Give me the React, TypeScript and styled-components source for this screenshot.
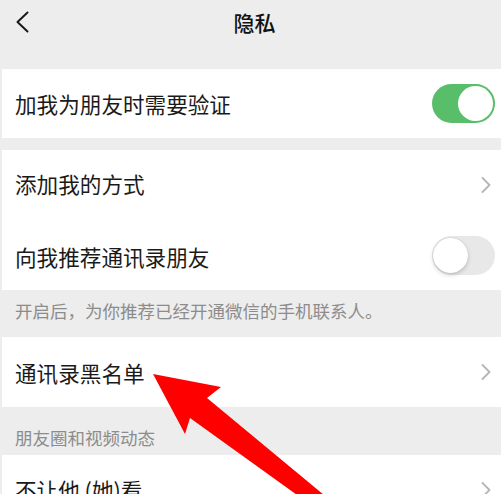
import { createGlobalStyle, styled } from "styled-components";

const GlobalStyle = createGlobalStyle`
  html, body {
    margin: 0;
    padding: 0;
    background: #ededed;
  }
  * {
    box-sizing: border-box;
  }
`;

const Page = styled.div`
  position: relative;
  width: 501px;
  height: 494px;
  overflow: hidden;
  background: #ededed;
  padding-left: 2px;
  font-family: "Noto Sans CJK SC", "Noto Sans", sans-serif;
  display: flex;
  flex-direction: column;
`;

const Header = styled.div`
  height: 69px;
  flex-shrink: 0;
`;

const NavBar = styled.div`
  position: relative;
  height: 44px;
  display: flex;
  align-items: center;
  justify-content: center;
  padding: 0 13px;
`;

const BackButton = styled.button`
  position: absolute;
  left: 13px;
  top: 11px;
  width: 14px;
  height: 22px;
  padding: 0;
  border: none;
  background: transparent;
  display: flex;
`;

const Title = styled.div`
  font-size: 21px;
  font-weight: 500;
  color: #111;
  line-height: 24px;
  margin-left: 6px;
`;

const Group = styled.div`
  background: #fff;
  flex-shrink: 0;
`;

const Row = styled.div`
  height: 70px;
  display: flex;
  align-items: center;
  justify-content: space-between;
  padding: 0 6px 0 13px;
`;

const Label = styled.div<{ $shift?: number }>`
  font-size: 21.6px;
  color: #1a1a1a;
  line-height: 26px;
  transform: translateY(${(p) => p.$shift ?? 0}px);
`;

const Gap = styled.div`
  height: 12px;
  flex-shrink: 0;
`;

const Note = styled.div<{ $height: number; $top: number }>`
  height: ${(p) => p.$height}px;
  padding: ${(p) => p.$top}px 13px 0;
  font-size: 17.5px;
  line-height: 22px;
  color: #8c8c8c;
  flex-shrink: 0;
`;

const Track = styled.div<{ $on: boolean }>`
  position: relative;
  width: 63px;
  height: 39px;
  border-radius: 20px;
  background: ${(p) => (p.$on ? "#58be6a" : "#e8e8e8")};
`;

const Knob = styled.div<{ $on: boolean }>`
  position: absolute;
  top: 2px;
  left: ${(p) => (p.$on ? "26px" : "1px")};
  width: 35px;
  height: 35px;
  border-radius: 50%;
  background: #fff;
  box-shadow: ${(p) =>
    p.$on ? "none" : "0 2px 4px rgba(0, 0, 0, 0.18), 0 0 1px rgba(0,0,0,0.2)"};
`;

const Chevron = styled.svg`
  width: 14px;
  height: 16px;
  margin-right: 2px;
`;

const ArrowLayer = styled.svg`
  position: absolute;
  left: 0;
  top: 0;
  width: 501px;
  height: 494px;
  pointer-events: none;
`;

const Toggle = ({ on }: { on: boolean }) => (
  <Track $on={on}>
    <Knob $on={on} />
  </Track>
);

const More = () => (
  <Chevron viewBox="0 0 14 16">
    <path
      d="M3.5 1 L10.5 8 L3.5 15"
      fill="none"
      stroke="#b5b5b5"
      strokeWidth="1.8"
      strokeLinecap="round"
      strokeLinejoin="round"
    />
  </Chevron>
);

export default function App() {
  return (
    <>
      <GlobalStyle />
      <Page>
        <Header>
          <NavBar>
            <BackButton>
              <svg width="14" height="22" viewBox="0 0 14 22">
                <path
                  d="M12.5 1.5 L2.5 11 L12.5 20.5"
                  fill="none"
                  stroke="#1a1a1a"
                  strokeWidth="2"
                  strokeLinecap="round"
                  strokeLinejoin="round"
                />
              </svg>
            </BackButton>
            <Title>隐私</Title>
          </NavBar>
        </Header>

        <Group>
          <Row style={{ height: 69 }}>
            <Label>加我为朋友时需要验证</Label>
            <Toggle on />
          </Row>
        </Group>

        <Gap />

        <Group>
          <Row>
            <Label $shift={-1}>添加我的方式</Label>
            <More />
          </Row>
          <Row>
            <Label $shift={2}>向我推荐通讯录朋友</Label>
            <Toggle on={false} />
          </Row>
        </Group>

        <Note $height={47} $top={10}>
          开启后，为你推荐已经开通微信的手机联系人。
        </Note>

        <Group>
          <Row>
            <Label $shift={1}>通讯录黑名单</Label>
            <More />
          </Row>
        </Group>

        <Note $height={48} $top={20}>
          朋友圈和视频动态
        </Note>

        <Group>
          <Row>
            <Label>不让他 (她)看</Label>
            <More />
          </Row>
        </Group>

        <ArrowLayer viewBox="0 0 501 494">
          <polygon
            points="153,374 221,387 207,398 330,500 304,500 190,418 185,434"
            fill="#ff0000"
          />
        </ArrowLayer>
      </Page>
    </>
  );
}
